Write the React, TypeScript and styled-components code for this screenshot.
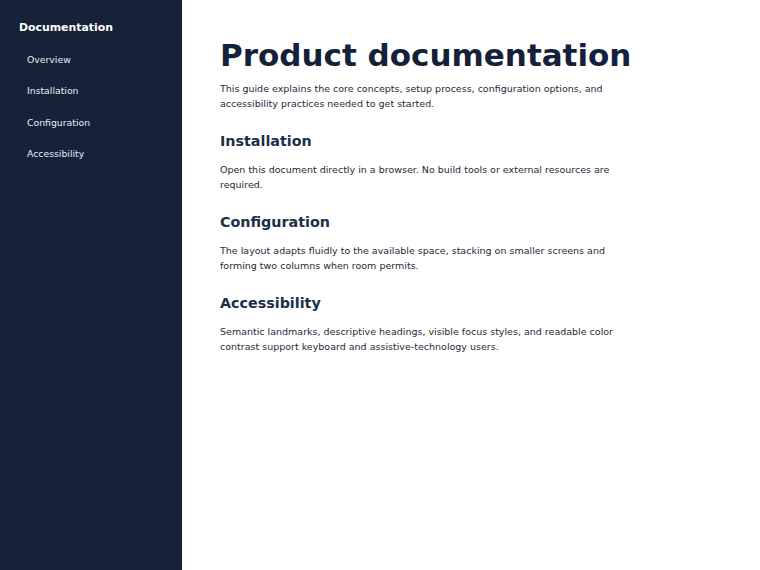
import styled, { createGlobalStyle } from "styled-components";

const GlobalStyle = createGlobalStyle`
  html, body {
    margin: 0;
    padding: 0;
    background: #ffffff;
    font-family: "DejaVu Sans", sans-serif;
  }
`;

const Layout = styled.div`
  display: flex;
  min-height: 570px;
`;

const Sidebar = styled.nav`
  width: 182px;
  flex-shrink: 0;
  background: #162238;
  color: #ffffff;
  padding: 21px 0 0 19px;
  box-sizing: border-box;
`;

const SidebarTitle = styled.div`
  font-size: 10.9px;
  line-height: 14px;
  font-weight: bold;
  margin-bottom: 18px;
`;

const NavList = styled.ul`
  list-style: none;
  margin: 0;
  padding: 0 0 0 8px;
  display: flex;
  flex-direction: column;
  gap: 17.3px;
`;

const NavLink = styled.a`
  display: block;
  color: #e8edf5;
  font-size: 9.3px;
  line-height: 14px;
  text-decoration: none;
`;

const Main = styled.main`
  flex: 1;
  padding: 36px 0 0 38px;
`;

const Content = styled.article`
  max-width: 405px;
`;

const Title = styled.h1`
  margin: 0 0 7px;
  font-size: 31px;
  line-height: 38px;
  color: #14213a;
  white-space: nowrap;
`;

const Section = styled.section`
  margin-top: 20px;
`;

const Heading = styled.h2`
  margin: 0 0 10.5px;
  font-size: 14.3px;
  line-height: 20px;
  color: #1b2e4b;
`;

const Text = styled.p`
  margin: 0;
  font-size: 9.5px;
  line-height: 15.2px;
  color: #1f2937;
`;

const navItems = ["Overview", "Installation", "Configuration", "Accessibility"];

const sections = [
  {
    title: "Installation",
    text: "Open this document directly in a browser. No build tools or external resources are required.",
  },
  {
    title: "Configuration",
    text: "The layout adapts fluidly to the available space, stacking on smaller screens and forming two columns when room permits.",
  },
  {
    title: "Accessibility",
    text: "Semantic landmarks, descriptive headings, visible focus styles, and readable color contrast support keyboard and assistive-technology users.",
  },
];

export default function App() {
  return (
    <>
      <GlobalStyle />
      <Layout>
        <Sidebar>
          <SidebarTitle>Documentation</SidebarTitle>
          <NavList>
            {navItems.map((item) => (
              <li key={item}>
                <NavLink href={`#${item.toLowerCase()}`}>{item}</NavLink>
              </li>
            ))}
          </NavList>
        </Sidebar>
        <Main>
          <Content>
            <Title>Product documentation</Title>
            <Text>
              This guide explains the core concepts, setup process, configuration
              options, and accessibility practices needed to get started.
            </Text>
            {sections.map((s) => (
              <Section key={s.title} id={s.title.toLowerCase()}>
                <Heading>{s.title}</Heading>
                <Text>{s.text}</Text>
              </Section>
            ))}
          </Content>
        </Main>
      </Layout>
    </>
  );
}
